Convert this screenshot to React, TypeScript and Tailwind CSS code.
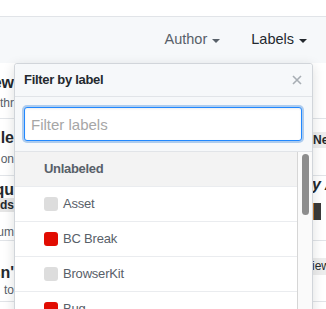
import React from 'react';

const LABELS = [
  { name: 'Asset', swatch: 'bg-[#dddddd]' },
  { name: 'BC Break', swatch: 'bg-[#e10c02]' },
  { name: 'BrowserKit', swatch: 'bg-[#dddddd]' },
  { name: 'Bug', swatch: 'bg-[#e10c02]' },
  { name: 'Cache', swatch: 'bg-[#dddddd]' },
];

function Caret() {
  return (
    <svg width="8" height="4" viewBox="0 0 8 4" className="mt-[2px]" aria-hidden>
      <path d="M0 0h8L4 4z" fill="currentColor" />
    </svg>
  );
}

// Issue rows sitting behind the menu; only their edges peek out.
function IssueRows() {
  return (
    <div className="text-[#24292e]">
      <div className="flex h-[56px] justify-between border-b border-[#e1e4e8]">
        <div className="w-[14px] overflow-hidden pt-[10px]">
          <div className="flex justify-end whitespace-nowrap text-[16px] font-bold leading-[20px]">Preview</div>
          <div className="mt-[1px] flex justify-end whitespace-nowrap text-[12px] leading-[18px] text-[#586069]">thr</div>
        </div>
        <div className="w-[14px]" />
      </div>

      <div className="flex h-[57px] justify-between border-b border-[#e1e4e8]">
        <div className="w-[14px] overflow-hidden pt-[9px]">
          <div className="flex justify-end whitespace-nowrap text-[16px] font-bold leading-[20px]">Controlle</div>
          <div className="mt-[2px] flex justify-end whitespace-nowrap text-[12px] leading-[18px] text-[#586069]">on</div>
        </div>
        <div className="w-[14px] overflow-hidden pt-[13px]">
          <span className="block h-[16px] whitespace-nowrap bg-[#ededed] pl-[1px] text-[12px] font-bold leading-[16px]">New feature</span>
        </div>
      </div>

      <div className="flex h-[65px] justify-between border-b border-[#e1e4e8]">
        <div className="w-[14px] overflow-hidden pt-[5px]">
          <div className="flex justify-end whitespace-nowrap text-[16px] font-bold leading-[18px]">Requ</div>
          <div className="mt-[-1px] flex justify-end whitespace-nowrap">
            <span className="h-[14px] bg-[#e6e6e6] text-[12px] font-bold leading-[14px]">Needs</span>
          </div>
          <div className="mt-[11px] flex justify-end whitespace-nowrap text-[12px] leading-[18px] text-[#586069]">Medium</div>
        </div>
        <div className="w-[14px] overflow-hidden pt-[0px]">
          <div className="whitespace-nowrap text-[16px] font-bold italic leading-[18px]">y Al</div>
          <span className="mt-[9px] block h-[17px] w-[9px] border-l-[2px] border-[#c87a2b] bg-[#3a3a3a]" />
        </div>
      </div>

      <div className="flex h-[61px] justify-between border-b border-[#e1e4e8]">
        <div className="w-[14px] overflow-hidden pt-[22px]">
          <div className="flex justify-end whitespace-nowrap text-[16px] font-bold leading-[20px]">Doesn'</div>
          <div className="mt-[-2px] flex justify-end whitespace-nowrap text-[12px] leading-[18px] text-[#586069]">to</div>
        </div>
        <div className="w-[14px] overflow-hidden pt-[17px]">
          <span className="block h-[17px] whitespace-nowrap bg-[#ededed] text-[12px] leading-[17px]">iew</span>
        </div>
      </div>
    </div>
  );
}

function LabelMenu() {
  return (
    <div className="absolute left-[14px] top-[63px] w-[299px] rounded-t-[3px] border border-[#d1d5da] bg-white shadow-[0_3px_12px_rgba(27,31,35,0.15)]">
      <div className="flex h-[33px] items-center justify-between rounded-t-[3px] border-b border-[#e1e4e8] bg-[#f6f8fa] pl-[9px] pr-[10px]">
        <span className="text-[13px] font-bold tracking-[-0.3px] text-[#24292e]">Filter by label</span>
        <svg width="10" height="10" viewBox="0 0 10 10" aria-hidden>
          <path d="M1 1l8 8M9 1L1 9" stroke="#a8aeb4" strokeWidth="1.6" />
        </svg>
      </div>

      <div className="h-[55px] border-b border-[#e1e4e8] bg-[#f6f8fa] pl-[9px] pr-[10px] pt-[10px]">
        <input
          type="text"
          placeholder="Filter labels"
          className="block h-[34px] w-full rounded-[3px] border border-[#2188ff] bg-white pl-[6px] text-[15px] text-[#24292e] shadow-[inset_0_1px_2px_rgba(27,31,35,0.075),0_0_0_2px_rgba(3,102,214,0.3)] outline-none placeholder:text-[#a6a6a6]"
        />
      </div>

      <div className="flex">
        <div className="min-w-0 flex-1">
          <div className="flex h-[35px] items-center border-b border-[#eaecef] bg-[#f3f3f3] pl-[29px] text-[13px] font-bold tracking-[-0.3px] text-[#586069]">
            Unlabeled
          </div>
          {LABELS.map((label) => (
            <div
              key={label.name}
              className="flex h-[35px] items-center border-b border-[#eaecef] pl-[29px] text-[13px] tracking-[-0.2px] text-[#586069]"
            >
              <span className={`mr-[5px] h-[14px] w-[14px] shrink-0 rounded-[3px] ${label.swatch}`} />
              {label.name}
            </div>
          ))}
        </div>
        <div className="w-[15px] shrink-0 border-l border-[#d6d6d6] bg-[#fafafa] pt-[2px]">
          <div className="mx-auto h-[61px] w-[7px] rounded-full bg-[#8d8d8d]" />
        </div>
      </div>
    </div>
  );
}

export default function App() {
  return (
    <div className="relative h-[309px] w-[326px] overflow-hidden bg-white font-['Liberation_Sans',Arial,sans-serif]">
      <div className="h-[17px] border-b border-[#e1e4e8]" />
      <div className="flex h-[46px] items-center justify-end bg-[#f6f8fa] pr-[19px] text-[14.5px]">
        <button type="button" className="flex items-center gap-[5px] text-[#586069]">
          Author
          <Caret />
        </button>
        <button type="button" className="ml-[31px] flex items-center gap-[5px] text-[#24292e]">
          Labels
          <Caret />
        </button>
      </div>
      <IssueRows />
      <LabelMenu />
    </div>
  );
}
